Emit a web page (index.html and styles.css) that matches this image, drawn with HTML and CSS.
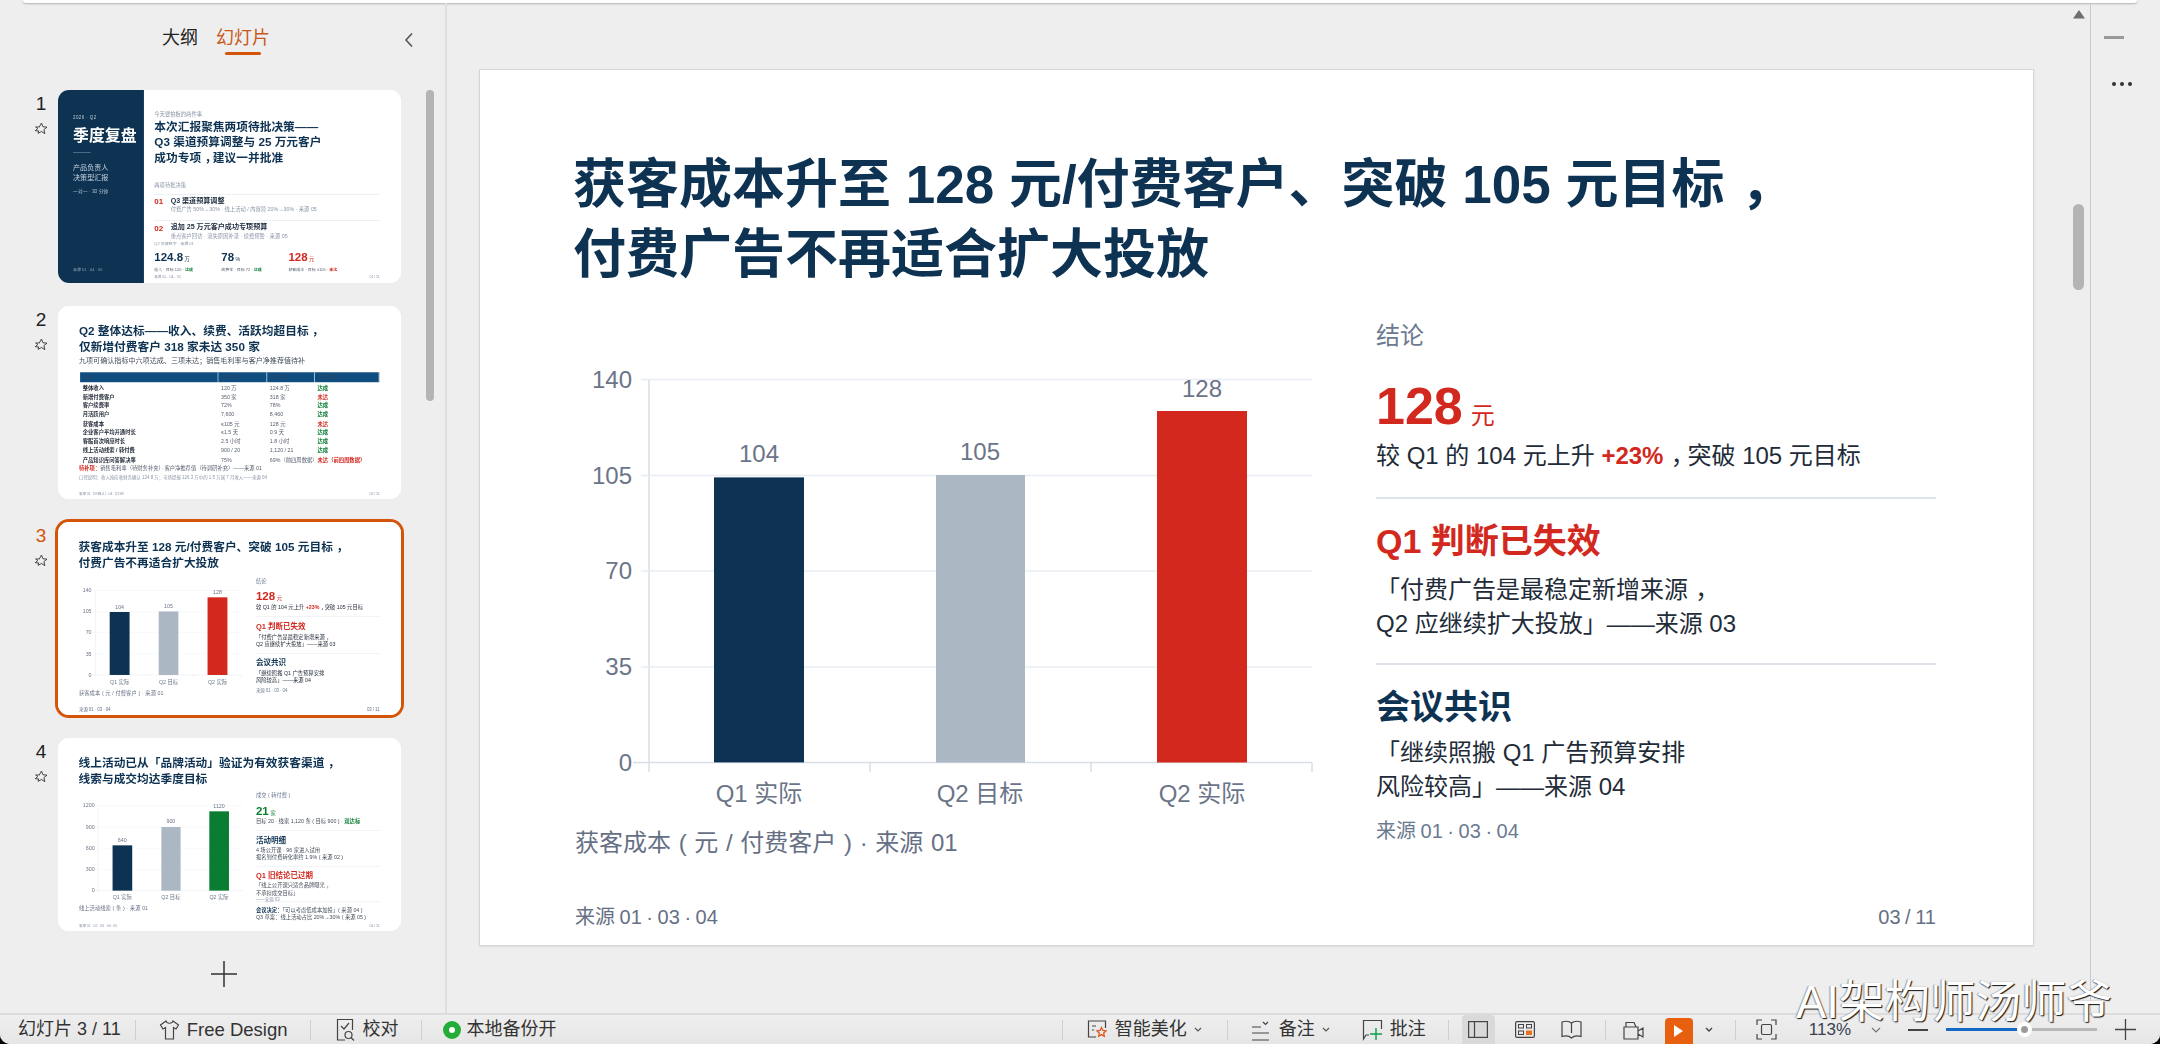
FILE: index.html
```html
<!DOCTYPE html>
<html lang="zh-CN">
<head>
<meta charset="utf-8">
<title>幻灯片 3 / 11</title>
<link rel="stylesheet" href="styles.css">
</head>
<body>
<div class="app">
  <div class="topstrip"></div>
  <div class="main">
    <aside class="sidebar">
      <div class="tabs">
        <span class="tab">大纲</span>
        <span class="tab tab-on">幻灯片</span>
        <svg class="collapse" width="10" height="16" viewBox="0 0 10 16"><path d="M8 1.500 2 8l6 6.500" fill="none" stroke="#555" stroke-width="1.600"/></svg>
      </div>
      <div class="thumbs">
        <div class="thumb-row">
          <div class="idx"><span>1</span><svg width="14" height="13" viewBox="0 0 14 13"><path d="M7.500 1 9 4.800l4 .3-3.100 2.600 1 3.900L7.500 9.500 4 11.300l.6-2.500H1.200l2.600-2.300L1.600 5H5.300z" fill="none" stroke="#444" stroke-width="1"/></svg></div>
          <div class="thumb"><div class="thumb-inner">
            <section class="slide slide-cover">
              <div class="cover-left">
                <div class="cover-date">2026 · Q2</div>
                <div class="cover-title">季度复盘</div>
                <div class="cover-rule"></div>
                <div class="cover-role">产品负责人<br>决策型汇报</div>
                <div class="cover-meta">一对一 · 30 分钟</div>
                <div class="cover-src">来源 01 · 04 · 05</div>
              </div>
              <div class="cover-right">
                <div class="cover-kicker">今天要拍板的两件事</div>
                <h2 class="title cover-head">本次汇报聚焦两项待批决策——<br>Q3 渠道预算调整与 25 万元客户<br>成功专项<span class="cm">，</span>建议一并批准</h2>
                <div class="cover-label">两项待批决策</div>
                <div class="decision">
                  <b class="decision-no">01</b>
                  <div><div class="decision-t">Q3 渠道预算调整</div><div class="decision-s">付费广告 50%→30% · 线上活动 / 内容营 20%→30% · 来源 05</div></div>
                </div>
                <div class="decision decision-2">
                  <b class="decision-no">02</b>
                  <div><div class="decision-t">追加 25 万元客户成功专项预算</div><div class="decision-s">重点客户回访 · 流失原因补录 · 续费预警 · 来源 05</div></div>
                </div>
                <div class="kpi-label">Q2 关键数字 · 来源 01</div>
                <div class="kpis">
                  <div><div class="kpi navy">124.8<small>万</small></div><div class="kpi-sub">收入 · 目标 120 · <b class="green">达成</b></div></div>
                  <div><div class="kpi navy">78<small>%</small></div><div class="kpi-sub">续费率 · 目标 72 · <b class="green">达成</b></div></div>
                  <div><div class="kpi red">128<small>元</small></div><div class="kpi-sub">获客成本 · 目标 ≤105 · <b class="red">未达</b></div></div>
                </div>
                <div class="foot foot-small"><span>来源 01、04、05</span><span>01 / 11</span></div>
              </div>
            </section>
          </div></div>
        </div>

        <div class="thumb-row">
          <div class="idx"><span>2</span><svg width="14" height="13" viewBox="0 0 14 13"><path d="M7.500 1 9 4.800l4 .3-3.100 2.600 1 3.900L7.500 9.500 4 11.300l.6-2.500H1.200l2.600-2.300L1.600 5H5.300z" fill="none" stroke="#444" stroke-width="1"/></svg></div>
          <div class="thumb"><div class="thumb-inner">
            <section class="slide slide-table">
              <h2 class="title">Q2 整体达标——收入、续费、活跃均超目标<span class="cm">，</span><br>仅新增付费客户 318 家未达 350 家</h2>
              <p class="lead">九项可确认指标中六项达成、三项未达；销售毛利率与客户净推荐值待补</p>
              <div class="tbl">
                <div class="tr th"><span>指标</span><span>Q2 目标</span><span>Q2 实际</span><span>达成情况</span></div>
                <div class="tr"><b>整体收入</b><span>120 万</span><span>124.8 万</span><b class="green">达成</b></div>
                <div class="tr"><b>新增付费客户</b><span>350 家</span><span>318 家</span><b class="red">未达</b></div>
                <div class="tr"><b>客户续费率</b><span>72%</span><span>78%</span><b class="green">达成</b></div>
                <div class="tr"><b>月活跃用户</b><span>7,600</span><span>8,460</span><b class="green">达成</b></div>
                <div class="tr"><b>获客成本</b><span>≤105 元</span><span>128 元</span><b class="red">未达</b></div>
                <div class="tr"><b>企业客户平均开通时长</b><span>≤1.5 天</span><span>0.9 天</span><b class="green">达成</b></div>
                <div class="tr"><b>客服首次响应时长</b><span>2.5 小时</span><span>1.8 小时</span><b class="green">达成</b></div>
                <div class="tr"><b>线上活动线索 / 转付费</b><span>900 / 20</span><span>1,120 / 21</span><b class="green">达成</b></div>
                <div class="tr"><b>产品知识库问答解决率</b><span>75%</span><span>69%（前四周数据）</span><b class="red">未达（前四周数据）</b></div>
              </div>
              <p class="pending"><b class="red">待补项：</b>销售毛利率（待财务补充）· 客户净推荐值（待调研补充）——来源 01</p>
              <p class="caliber">口径说明：收入按应收财务确认 124.8 万；市场提报 126.3 万中的 1.5 万属 7 月收入——来源 04</p>
              <div class="foot foot-small"><span>来源 01（已确认）· 04（口径）</span><span>02 / 11</span></div>
            </section>
          </div></div>
        </div>

        <div class="thumb-row">
          <div class="idx idx-on"><span>3</span><svg width="14" height="13" viewBox="0 0 14 13"><path d="M7.500 1 9 4.800l4 .3-3.100 2.600 1 3.900L7.500 9.500 4 11.300l.6-2.500H1.200l2.600-2.300L1.600 5H5.300z" fill="none" stroke="#444" stroke-width="1"/></svg></div>
          <div class="thumb thumb-on"><div class="thumb-inner">
            <section class="slide">
              <h2 class="title">获客成本升至 128 元/付费客户、突破 105 元目标<span class="cm">，</span><br>付费广告不再适合扩大投放</h2>
              <div class="body">
                <div class="chart-col">
                  <svg class="chart" width="745" height="490" viewBox="0 0 745 490">
                    <g class="grid"><path d="M74 59.500H737M74 155.500H737M74 251H737M74 347H737"/><path class="axis" d="M74 59.500V452M58 442.500H737M295 442.500V452M516 442.500V452M737 442.500V452"/><path d="M66 59.500H74M66 155.500H74M66 251H74M66 347H74"/></g>
                    <rect x="139" y="157.400" width="90" height="285" fill="#0d3252"/><rect x="361" y="155" width="89" height="287.500" fill="#abb7c3"/><rect x="582" y="91" width="90" height="351.500" fill="#d2281e"/>
                    <g class="yl"><text x="57" y="68">140</text><text x="57" y="164">105</text><text x="57" y="259">70</text><text x="57" y="355">35</text><text x="57" y="451">0</text></g>
                    <g class="vl"><text x="184" y="142">104</text><text x="405" y="140">105</text><text x="627" y="77">128</text><text x="184" y="482">Q1 实际</text><text x="405" y="482">Q2 目标</text><text x="627" y="482">Q2 实际</text></g>
                  </svg>
                  <div class="caption">获客成本 ( 元 / 付费客户 ) · 来源 01</div>
                </div>
                <div class="side">
                  <div class="side-label">结论</div>
                  <div class="big red">128<small>元</small></div>
                  <div class="side-text side-first">较 Q1 的 104 元上升 <b class="red">+23%</b><span class="cm">，</span>突破 105 元目标</div>
                  <div class="rule rule-a"></div>
                  <div class="side-h red">Q1 判断已失效</div>
                  <div class="side-text side-quote">「付费广告是最稳定新增来源<span class="cm">，</span><br>Q2 应继续扩大投放」——来源 03</div>
                  <div class="rule rule-b"></div>
                  <div class="side-h navy">会议共识</div>
                  <div class="side-text side-quote2">「继续照搬 Q1 广告预算安排<br>风险较高」——来源 04</div>
                  <div class="side-src">来源 01 · 03 · 04</div>
                </div>
              </div>
              <div class="foot"><span>来源 01 · 03 · 04</span><span>03 / 11</span></div>
            </section>
          </div></div>
        </div>

        <div class="thumb-row">
          <div class="idx"><span>4</span><svg width="14" height="13" viewBox="0 0 14 13"><path d="M7.500 1 9 4.800l4 .3-3.100 2.600 1 3.900L7.500 9.500 4 11.300l.6-2.500H1.200l2.600-2.300L1.600 5H5.300z" fill="none" stroke="#444" stroke-width="1"/></svg></div>
          <div class="thumb"><div class="thumb-inner">
            <section class="slide slide-four">
              <h2 class="title">线上活动已从「品牌活动」验证为有效获客渠道<span class="cm">，</span><br>线索与成交均达季度目标</h2>
              <div class="body">
                <div class="chart-col">
                  <svg class="chart" width="745" height="490" viewBox="0 0 745 490">
                    <g class="grid"><path d="M86 62H745M86 159H745M86 255H745M86 351H745"/><path class="axis" d="M86 62V456M72 447H745"/></g>
                    <rect x="152" y="242" width="89" height="205" fill="#0d3252"/><rect x="373" y="159" width="87" height="288" fill="#abb7c3"/><rect x="590" y="88" width="89" height="359" fill="#0a7d32"/>
                    <g class="yl"><text x="71" y="70">1200</text><text x="71" y="167">900</text><text x="71" y="263">600</text><text x="71" y="359">300</text><text x="71" y="455">0</text></g>
                    <g class="vl"><text x="196" y="227">640</text><text x="416" y="143">900</text><text x="634" y="73">1120</text><text x="196" y="485">Q1 实际</text><text x="416" y="485">Q2 目标</text><text x="634" y="485">Q2 实际</text></g>
                  </svg>
                  <div class="caption">线上活动线索 ( 条 ) · 来源 01</div>
                </div>
                <div class="side">
                  <div class="side-label">成交 ( 转付费 )</div>
                  <div class="big green">21<small>家</small></div>
                  <div class="four-d">目标 20 · 线索 1,120 条 ( 目标 900 ) · <b class="green">双达标</b></div>
                  <div class="rule rule-4a"></div>
                  <div class="side-h navy h-4">活动明细</div>
                  <div class="four-t t-a">4 场公开课 · 96 家进入试用<br>报名到付费转化率约 1.9% ( 来源 02 )</div>
                  <div class="rule rule-4b"></div>
                  <div class="side-h red h-4">Q1 旧结论已过期</div>
                  <div class="four-q">「线上公开课只适合品牌曝光<span class="cm">，</span><br>不承担成交目标」<br><span class="four-q3">——来源 03</span></div>
                  <div class="rule rule-4c"></div>
                  <div class="four-t t-b"><b class="navy">会议决定：</b>「可以考虑低成本加投」( 来源 04 )<br>Q3 草案：线上活动占比 20%→30% ( 来源 05 )</div>
                </div>
              </div>
              <div class="foot foot-small"><span>来源 01 · 02 · 03 · 04 · 05</span><span>04 / 11</span></div>
            </section>
          </div></div>
        </div>

        <div class="add"><svg width="26" height="26" viewBox="0 0 26 26"><path d="M13 0v26M0 13h26" stroke="#333" stroke-width="1.500"/></svg></div>
      </div>
      <div class="thumbs-scroll"></div>
    </aside>

    <main class="editor">
      <section class="slide slide-main">
        <h2 class="title">获客成本升至 128 元/付费客户、突破 105 元目标<span class="cm">，</span><br>付费广告不再适合扩大投放</h2>
        <div class="body">
          <div class="chart-col">
            <svg class="chart" width="745" height="490" viewBox="0 0 745 490">
              <g class="grid"><path d="M74 59.500H737M74 155.500H737M74 251H737M74 347H737"/><path class="axis" d="M74 59.500V452M58 442.500H737M295 442.500V452M516 442.500V452M737 442.500V452"/><path d="M66 59.500H74M66 155.500H74M66 251H74M66 347H74"/></g>
              <rect x="139" y="157.400" width="90" height="285" fill="#0d3252"/><rect x="361" y="155" width="89" height="287.500" fill="#abb7c3"/><rect x="582" y="91" width="90" height="351.500" fill="#d2281e"/>
              <g class="yl"><text x="57" y="68">140</text><text x="57" y="164">105</text><text x="57" y="259">70</text><text x="57" y="355">35</text><text x="57" y="451">0</text></g>
              <g class="vl"><text x="184" y="142">104</text><text x="405" y="140">105</text><text x="627" y="77">128</text><text x="184" y="482">Q1 实际</text><text x="405" y="482">Q2 目标</text><text x="627" y="482">Q2 实际</text></g>
            </svg>
            <div class="caption">获客成本 ( 元 / 付费客户 ) · 来源 01</div>
          </div>
          <div class="side">
            <div class="side-label">结论</div>
            <div class="big red">128<small>元</small></div>
            <div class="side-text side-first">较 Q1 的 104 元上升 <b class="red">+23%</b><span class="cm">，</span>突破 105 元目标</div>
            <div class="rule rule-a"></div>
            <div class="side-h red">Q1 判断已失效</div>
            <div class="side-text side-quote">「付费广告是最稳定新增来源<span class="cm">，</span><br>Q2 应继续扩大投放」——来源 03</div>
            <div class="rule rule-b"></div>
            <div class="side-h navy">会议共识</div>
            <div class="side-text side-quote2">「继续照搬 Q1 广告预算安排<br>风险较高」——来源 04</div>
            <div class="side-src">来源 01 · 03 · 04</div>
          </div>
        </div>
        <div class="foot"><span>来源 01 · 03 · 04</span><span>03 / 11</span></div>
      </section>
      <svg class="up-arrow" width="12" height="9" viewBox="0 0 12 9"><path d="M6 0l6 8.500H0z" fill="#6e6e6e"/></svg>
      <div class="editor-scroll"></div>
    </main>

    <aside class="rail">
      <div class="rail-min"></div>
      <div class="rail-dots"><i></i><i></i><i></i></div>
    </aside>
  </div>

  <footer class="status">
    <div class="status-group">
      <span class="st-text">幻灯片 3 / 11</span>
      <i class="sep ml-14"></i>
      <svg class="ml-23" width="21" height="22" viewBox="0 0 21 22"><path d="M7 2 1.500 6l2.500 4 2.500-1.500V20h8V8.500L17 10l2.500-4L14 2c-.5 3-6.500 3-7 0z" fill="none" stroke="#444" stroke-width="1.200"/></svg>
      <span class="st-text st-free ml-7">Free Design</span>
      <i class="sep ml-23"></i>
      <svg class="ml-25" width="19" height="24" viewBox="0 0 19 24"><path d="M9 22H1.500V1.500h15V12" fill="none" stroke="#444" stroke-width="1.200"/><path d="M5 8l3 3 5-6" fill="none" stroke="#444" stroke-width="1.200"/><circle cx="12.500" cy="17" r="3.500" fill="none" stroke="#444" stroke-width="1.200"/><path d="M15 19.500l3 3" stroke="#444" stroke-width="1.200"/></svg>
      <span class="st-text ml-7">校对</span>
      <i class="sep ml-23"></i>
      <span class="backup-dot ml-21"></span>
      <span class="st-text ml-5">本地备份开</span>
    </div>
    <div class="status-group status-right">
      <i class="sep"></i>
      <svg class="ml-24" width="21" height="21" viewBox="0 0 21 21"><path d="M9 18H1.500V2h17v7" fill="none" stroke="#444" stroke-width="1.200"/><path d="M5 7h4M5 11h2" stroke="#444" stroke-width="1.200"/><path d="M14.500 8.500l1.400 3 3.100.4-2.300 2.100.6 3.200-2.800-1.600-2.800 1.600.6-3.200-2.300-2.100 3.100-.4z" fill="none" stroke="#e0561a" stroke-width="1.300"/></svg>
      <span class="st-text ml-7">智能美化</span>
      <svg class="ml-7" width="8" height="5" viewBox="0 0 8 5"><path d="M1 1l3 3 3-3" fill="none" stroke="#555" stroke-width="1.200"/></svg>
      <i class="sep ml-25"></i>
      <svg class="ml-23" width="19" height="22" viewBox="0 0 19 22"><path d="M1 8h9M1 14h17M1 21h17" stroke="#444" stroke-width="1.200"/><path d="M12 3l2.500 2.500L17 3" fill="none" stroke="#444" stroke-width="1.200"/></svg>
      <span class="st-text ml-9">备注</span>
      <svg class="ml-7" width="8" height="5" viewBox="0 0 8 5"><path d="M1 1l3 3 3-3" fill="none" stroke="#555" stroke-width="1.200"/></svg>
      <svg class="ml-32" width="21" height="22" viewBox="0 0 21 22"><path d="M7 16H4l-2.500 4V1.500h18V10" fill="none" stroke="#444" stroke-width="1.200"/><path d="M14 9v12M8 15h12" stroke="#0a9d48" stroke-width="1.400"/></svg>
      <span class="st-text ml-7">批注</span>
      <i class="sep ml-22"></i>
      <span class="view-on"><svg width="20" height="17" viewBox="0 0 20 17"><rect x=".6" y=".6" width="18.800" height="15.800" fill="none" stroke="#444" stroke-width="1.200"/><path d="M6.500 1v15" stroke="#444" stroke-width="1.200"/></svg></span>
      <svg class="ml-20" width="20" height="17" viewBox="0 0 20 17"><rect x=".6" y=".6" width="18.800" height="15.800" rx="1.500" fill="none" stroke="#444" stroke-width="1.200"/><rect x="3.500" y="3.500" width="5" height="3.500" fill="none" stroke="#444"/><rect x="11.500" y="3.500" width="5" height="3.500" fill="none" stroke="#444"/><rect x="3.500" y="10" width="5" height="3.500" fill="none" stroke="#444"/><rect x="11" y="9.500" width="6" height="4.500" fill="#e8701f"/></svg>
      <svg class="ml-26" width="21" height="19" viewBox="0 0 21 19"><path d="M10.500 3 C8 1 4 1 1 2v14.500c3-1 7-1 9.500 1.500 2.500-2.500 6.500-2.500 9.500-1.500V2c-3-1-7-1-9.500 1z" fill="none" stroke="#444" stroke-width="1.200"/><path d="M10.500 3v10" stroke="#444" stroke-width="1.200"/></svg>
      <i class="sep ml-23"></i>
      <svg class="ml-17" width="21" height="20" viewBox="0 0 21 20"><path d="M1 7h14v12H1zM3 7V2.500h8L13 7M15 11l5-3v9l-5-3" fill="none" stroke="#444" stroke-width="1.200"/></svg>
      <span class="play"><svg width="9" height="12" viewBox="0 0 9 12"><path d="M0 0l9 6-9 6z" fill="#fff"/></svg></span>
      <svg class="ml-12" width="8" height="5" viewBox="0 0 8 5"><path d="M1 1l3 3 3-3" fill="none" stroke="#444" stroke-width="1.400"/></svg>
      <i class="sep ml-22"></i>
      <svg class="ml-20" width="21" height="21" viewBox="0 0 21 21"><path d="M1 6V1h5M15 1h5v5M20 15v5h-5M6 20H1v-5" fill="none" stroke="#444" stroke-width="1.200"/><rect x="5.500" y="5.500" width="10" height="10" rx="1.500" fill="none" stroke="#444" stroke-width="1.200"/></svg>
      <span class="st-text st-zoom">113%</span>
      <svg class="ml-20" width="10" height="6" viewBox="0 0 10 6"><path d="M1 1l4 4 4-4" fill="none" stroke="#777" stroke-width="1.200"/></svg>
      <span class="zoom-minus"></span>
      <span class="slider"><span class="slider-fill"></span><span class="slider-knob"></span></span>
      <svg class="ml-18" width="21" height="21" viewBox="0 0 21 21"><path d="M10.500 0v21M0 10.500h21" stroke="#444" stroke-width="1.300"/></svg>
    </div>
  </footer>
  <div class="watermark">AI架构师汤师爷</div>
</div>
</body>
</html>
```
FILE: styles.css
```css
* { box-sizing: border-box; }
html, body { margin: 0; height: 100%; background: #000; overflow: hidden; }
body, .slide { font-family: "Liberation Sans", "Noto Sans CJK SC", sans-serif; }
h2, p { margin: 0; }
.app { position: relative; width: 2160px; height: 1044px; display: flex; flex-direction: column; background: #eeeeee; border-radius: 0 0 10px 10px; overflow: hidden; }
.topstrip { height: 3px; margin: 0 23px; background: #fff; border-radius: 0 0 8px 8px; box-shadow: 0 1px 2px rgba(0,0,0,.25); flex: none; }
.main { flex: 1; display: flex; min-height: 0; }

/* sidebar */
.sidebar { position: relative; width: 447px; flex: none; border-right: 2px solid #dedede; }
.tabs { height: 87px; display: flex; align-items: flex-start; padding: 25px 0 0 162px; position: relative; }
.tab { font-size: 18px; line-height: 21px; color: #222; margin-right: 18px; }
.tab-on { color: #c9591a; position: relative; }
.tab-on::after { content: ""; position: absolute; left: 9px; right: 9px; top: 24px; height: 3px; border-radius: 2px; background: #d4550a; }
.collapse { margin: 4px 0 0 116px; }
.thumbs { display: flex; flex-direction: column; gap: 23px; }
.thumb-row { display: flex; }
.idx { width: 58px; padding-left: 24px; display: flex; flex-direction: column; align-items: center; flex: none; }
.idx span { width: 34px; text-align: center; font-size: 19px; line-height: 22px; margin-top: 3px; color: #222; }
.idx svg { margin-top: 7px; }
.idx-on span { color: #d4550a; }
.thumb { width: 343px; height: 193px; border-radius: 11px; background: #fff; flex: none; }
.thumb-on { box-shadow: 0 0 0 3px #d4550a; }
.thumb-inner { width: 343px; height: 193px; overflow: hidden; border-radius: 11px; filter: blur(.3px); }
.thumb-inner .slide { transform: scale(.2209); transform-origin: 0 0; }
.add { margin-top: 7px; padding-left: 211px; line-height: 0; }
.thumbs-scroll { position: absolute; left: 426px; top: 87px; width: 8px; height: 311px; border-radius: 4px; background: #b4b4b4; }

/* editor */
.editor { position: relative; flex: 1; padding: 67px 0 0 33px; }
.slide { width: 1553px; height: 875px; background: #fff; display: flex; flex-direction: column; padding: 80px 97px 14px 95px; color: #222b38; overflow: hidden; }
.slide-main { box-shadow: 0 0 0 1px #d6d6d6, 0 1px 3px rgba(0,0,0,.15); }
.up-arrow { position: absolute; left: 1626px; top: 7px; }
.editor-scroll { position: absolute; left: 1626px; top: 201px; width: 11px; height: 86px; border-radius: 6px; background: #b4b4b4; }

/* rail */
.rail { width: 70px; flex: none; border-left: 1px solid #c9c9c9; display: flex; flex-direction: column; padding: 33px 0 0 13px; }
.rail-min { width: 20px; height: 3px; background: #999; }
.rail-dots { display: flex; gap: 4px; margin: 43px 0 0 8px; }
.rail-dots i { width: 4px; height: 4px; border-radius: 50%; background: #333; }

/* slide text */
.title { font-size: 53px; line-height: 70px; font-weight: 700; color: #0d3252; margin-left: -2px; white-space: nowrap; }
.cm { display: inline-block; transform: translateX(.3em); }
.navy { color: #0d3252; }
.red { color: #d2281e; }
.green { color: #0a7d32; }
.body { display: flex; gap: 56px; margin-top: 30px; }
.chart-col { width: 745px; flex: none; }
.chart { display: block; }
.grid path { fill: none; stroke: #e9edf3; stroke-width: 1.500; }
.grid path.axis { stroke: #d9dee8; }
.yl text { font-size: 24px; text-anchor: end; fill: #6b7488; }
.vl text { font-size: 24px; text-anchor: middle; fill: #6b7488; }
.caption { margin-top: 17px; font-size: 24px; line-height: 32px; color: #667085; word-spacing: 1px; }
.side { width: 560px; flex: none; }
.side-label { font-size: 24px; line-height: 32px; color: #6b7a90; }
.big { margin-top: 22px; font-size: 52px; line-height: 64px; font-weight: 700; }
.big small { font-size: 24px; line-height: 1; font-weight: 400; margin-left: 8px; }
.side-text { font-size: 24px; line-height: 34px; color: #222b38; }
.side-first { margin-top: 2px; line-height: 32px; }
.side-first b { font-weight: 700; }
.rule { height: 2px; background: #dfe3ea; }
.rule-a { margin-top: 25px; }
.side-h { font-size: 34px; line-height: 44px; font-weight: 700; margin-top: 20px; }
.side-quote { margin-top: 10px; }
.rule-b { margin-top: 22px; }
.side-quote2 { margin-top: 7px; }
.side-src { margin-top: 13px; font-size: 20px; line-height: 28px; color: #6b7a90; word-spacing: -1px; }
.foot { margin-top: auto; display: flex; justify-content: space-between; font-size: 20px; line-height: 28px; color: #667085; word-spacing: -1px; }
.foot-small { font-size: 16px; line-height: 24px; color: #8a94a6; }

/* cover */
.slide-cover { flex-direction: row; padding: 0; }
.cover-left { width: 389px; flex: none; background: #0d3252; padding: 111px 0 51px 68px; display: flex; flex-direction: column; color: #fff; }
.cover-date { font-size: 20px; line-height: 28px; letter-spacing: 2px; color: #c3cfdb; }
.cover-title { margin-top: 24px; font-size: 72px; line-height: 90px; font-weight: 700; }
.cover-rule { margin-top: 29px; width: 80px; height: 2px; background: #9fb1c4; }
.cover-role { margin-top: 42px; font-size: 32px; line-height: 48px; color: #c7d3df; }
.cover-meta { margin-top: 22px; font-size: 22px; line-height: 30px; color: #b5c3d1; }
.cover-src { margin-top: auto; font-size: 18px; line-height: 24px; color: #8ea1b5; }
.cover-right { flex: 1; padding: 95px 97px 15px 47px; display: flex; flex-direction: column; }
.cover-kicker { font-size: 24px; line-height: 30px; color: #8a94a6; }
.cover-head { margin-top: 7px; margin-left: 0; }
.cover-label { margin-top: 73px; font-size: 24px; line-height: 30px; color: #8a94a6; }
.decision { display: flex; margin-top: 26px; padding-top: 6px; border-top: 2px solid #d5dbe5; height: 84px; }
.decision-2 { margin-top: 35px; padding-top: 8px; height: 85px; }
.decision-no { width: 74px; flex: none; font-size: 36px; line-height: 50px; color: #d2281e; }
.decision-t { font-size: 32px; line-height: 40px; font-weight: 700; color: #1b2a3d; }
.decision-s { margin-top: 4px; font-size: 24px; line-height: 32px; color: #8a94a6; }
.kpi-label { margin-top: 9px; font-size: 18px; line-height: 24px; color: #8a94a6; }
.kpis { display: grid; grid-template-columns: repeat(3, 303.5px); margin-top: 18px; }
.kpi { font-size: 52px; line-height: 60px; font-weight: 700; }
.kpi small { font-size: 24px; line-height: 1; font-weight: 400; margin-left: 6px; }
.kpi-sub { margin-top: 14px; font-size: 18px; line-height: 26px; color: #555e6d; }

/* table slide */
.slide-table { padding-top: 77px; }
.slide-table .title { line-height: 72px; margin-left: 0; }
.lead { margin-top: 4px; font-size: 32px; line-height: 44px; color: #444c59; }
.tbl { margin: 31px 0 0 5px; font-size: 24px; }
.tr { display: grid; grid-template-columns: 626px 221px 216px 292px; height: 40.7px; line-height: 40.7px; color: #555e6d; white-space: nowrap; }
.tr > * { padding-left: 12px; font-weight: 400; }
.tr > b { font-weight: 700; color: #222b38; }
.tr > b.green { color: #0a7d32; }
.tr > b.red { color: #d2281e; }
.th { height: 45px; line-height: 45px; margin-bottom: 5px; column-gap: 0; color: #2c4a68; }
.th span { background: #0f4d80; border-right: 3px solid #fff; }
.pending { font-size: 24px; line-height: 32px; margin-top: 1px; color: #555e6d; white-space: nowrap; }
.pending b { font-weight: 700; }
.caliber { margin-top: 14px; font-size: 20px; line-height: 28px; color: #8a94a6; white-space: nowrap; }

/* slide 4 */
.slide-four .body { margin-top: 24px; }
.slide-four .caption { margin-top: 20px; }
.slide-four .big { margin-top: 24px; }
.four-d { margin-top: 0; font-size: 24px; line-height: 30px; color: #444c59; }
.four-d b { font-weight: 700; }
.rule-4a { margin-top: 25px; }
.h-4 { margin-top: 20px; }
.four-t { font-size: 24px; line-height: 35px; color: #444c59; }
.t-a { margin-top: 3px; }
.rule-4b { margin-top: 21px; }
.four-q { margin-top: 6px; font-size: 24px; line-height: 33px; color: #444c59; }
.four-q3 { display: block; font-size: 20px; line-height: 27px; color: #8a94a6; }
.rule-4c { margin-top: -3px; }
.t-b { margin-top: 17px; }
.t-b b { font-weight: 700; }

/* status bar */
.status { height: 31px; flex: none; display: flex; justify-content: space-between; padding: 0 24px 0 18px; background: linear-gradient(#eeeeee, #e6e6e6); border-top: 2px solid #dcdcdc; }
.status-group { display: flex; align-items: center; }
.st-text { font-size: 18px; line-height: 29px; color: #333; white-space: nowrap; }
.st-free { font-size: 18.5px; }
.sep { width: 1px; height: 20px; background: #cfcfcf; flex: none; }
.ml-5 { margin-left: 5px; } .ml-7 { margin-left: 7px; } .ml-9 { margin-left: 9px; }
.ml-12 { margin-left: 12px; } .ml-14 { margin-left: 14px; } .ml-17 { margin-left: 17px; } .ml-18 { margin-left: 18px; } .ml-20 { margin-left: 20px; }
.ml-21 { margin-left: 21px; } .ml-22 { margin-left: 22px; } .ml-23 { margin-left: 23px; } .ml-24 { margin-left: 24px; } .ml-25 { margin-left: 25px; }
.ml-26 { margin-left: 26px; } .ml-32 { margin-left: 32px; }
.backup-dot { width: 18px; height: 18px; border-radius: 50%; background: #fff; border: 6px solid #22ac38; flex: none; }
.view-on { margin-left: 13px; width: 33px; height: 100%; display: flex; align-items: center; justify-content: center; background: #d9d9d9; border-radius: 4px 4px 0 0; }
.play { margin-left: 21px; width: 28px; height: 26px; align-self: flex-end; display: flex; align-items: center; justify-content: center; background: #e8600f; border-radius: 4px 4px 0 0; }
.st-zoom { margin-left: 32px; font-size: 17px; color: #3a4252; }
.zoom-minus { margin-left: 27px; width: 20px; height: 2px; background: #444; }
.slider { position: relative; margin-left: 18px; width: 151px; height: 3px; background: #b8b8b8; }
.slider-fill { display: block; width: 79px; height: 3px; background: #1668c7; }
.slider-knob { position: absolute; left: 71px; top: -6px; width: 15px; height: 15px; border-radius: 50%; background: #9a9a9a; border: 4px solid #fff; }
.watermark { position: absolute; left: 1796px; top: 971px; font-size: 45.5px; line-height: 64px; color: #fff; text-shadow: 1px 1px 1px #111, -1px 0 1px rgba(0,0,0,.35); white-space: nowrap; }
```
